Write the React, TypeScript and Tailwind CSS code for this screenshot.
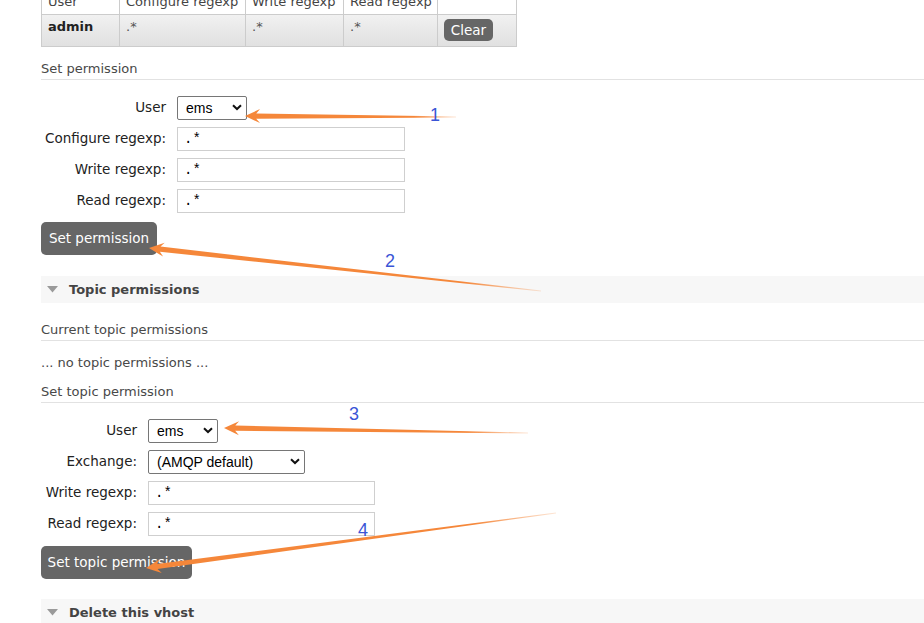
import React from "react";

/*
 * vhost 詳細 – permissions / topic permissions の画面
 * 矢印と番号は手書き注釈（スクリーンショット上の上書き）
 */

type Pt = [number, number];

function arrowPoints(tip: Pt, tail: Pt, headLen = 15, headHalf = 7, shaftHead = 2.6, shaftTail = 0.4) {
  const dx = tail[0] - tip[0];
  const dy = tail[1] - tip[1];
  const len = Math.hypot(dx, dy);
  const ux = dx / len;
  const uy = dy / len;
  const nx = -uy;
  const ny = ux;
  const bx = tip[0] + ux * headLen;
  const by = tip[1] + uy * headLen;
  const neck = headLen * 0.75;
  const cx = tip[0] + ux * neck;
  const cy = tip[1] + uy * neck;
  const pts: Pt[] = [
    tip,
    [bx + nx * headHalf, by + ny * headHalf],
    [cx + nx * shaftHead, cy + ny * shaftHead],
    [tail[0] + nx * shaftTail, tail[1] + ny * shaftTail],
    [tail[0] - nx * shaftTail, tail[1] - ny * shaftTail],
    [cx - nx * shaftHead, cy - ny * shaftHead],
    [bx - nx * headHalf, by - ny * headHalf],
  ];
  return pts.map((p) => `${p[0].toFixed(1)},${p[1].toFixed(1)}`).join(" ");
}

const arrows: { tip: Pt; tail: Pt; label: string; at: Pt }[] = [
  { tip: [245, 116], tail: [456, 117], label: "1", at: [430, 121] },
  { tip: [149, 248], tail: [541, 291], label: "2", at: [385, 267] },
  { tip: [224, 428], tail: [528, 433], label: "3", at: [349, 420] },
  { tip: [146, 568], tail: [556, 513], label: "4", at: [358, 536] },
];

function Annotations() {
  return (
    <svg className="pointer-events-none absolute left-0 top-0" width={924} height={623}>
      <defs>
        {arrows.map((a, i) => (
          <linearGradient
            key={i}
            id={`fade${i}`}
            gradientUnits="userSpaceOnUse"
            x1={a.tip[0]}
            y1={a.tip[1]}
            x2={a.tail[0]}
            y2={a.tail[1]}
          >
            <stop offset="0" stopColor="#f5873a" />
            <stop offset="0.8" stopColor="#f5873a" />
            <stop offset="1" stopColor="#f5873a" stopOpacity="0.2" />
          </linearGradient>
        ))}
      </defs>
      {arrows.map((a, i) => (
        <g key={i}>
          <polygon points={arrowPoints(a.tip, a.tail)} fill={`url(#fade${i})`} />
          <text x={a.at[0]} y={a.at[1]} fontSize="18" fontFamily="Liberation Sans, Arial, sans-serif" fill="#3a55d6">
            {a.label}
          </text>
        </g>
      ))}
    </svg>
  );
}

function Select({ value, width }: { value: string; width: string }) {
  return (
    <div className={`relative h-[24px] ${width}`}>
      <select
        defaultValue={value}
        className="h-full w-full appearance-none rounded-[2px] border border-[#767676] bg-white pl-[8px] font-['Liberation_Sans',Arial,sans-serif] text-[14px] text-black outline-none"
      >
        <option>{value}</option>
      </select>
      <svg className="pointer-events-none absolute right-[5px] top-[8px]" width="10" height="7" viewBox="0 0 10 7">
        <path d="M1 1.2 L5 5 L9 1.2" fill="none" stroke="#111" strokeWidth="2" />
      </svg>
    </div>
  );
}

function TextBox({ width }: { width: string }) {
  return (
    <input
      defaultValue=".*"
      className={`h-[24px] ${width} border border-[#cfcfcf] bg-white px-[6px] font-['Liberation_Mono',monospace] text-[14px] text-black outline-none`}
    />
  );
}

function Label({ children }: { children: React.ReactNode }) {
  return <div className="flex h-[24px] items-center justify-end whitespace-nowrap pb-[2px]">{children}</div>;
}

function Button({ children, className = "" }: { children: React.ReactNode; className?: string }) {
  return (
    <button className={`whitespace-nowrap rounded-[5px] bg-[#666] text-[13.5px] text-white ${className}`}>{children}</button>
  );
}

function SectionBar({ title }: { title: string }) {
  return (
    <div className="flex h-[27px] items-center gap-[11px] bg-[#f7f7f7] pl-[6px]">
      <svg width="11" height="7" viewBox="0 0 11 7">
        <path d="M0 0 H11 L5.5 6.5 Z" fill="#9a9a9a" />
      </svg>
      <span className="text-[13px] font-bold text-[#444]">{title}</span>
    </div>
  );
}

function SubHeading({ children }: { children: React.ReactNode }) {
  return (
    <h3 className="border-b border-[#e2e2e2] pb-[2px] text-[13px] leading-[16px] text-[#484848]">{children}</h3>
  );
}

const cell = "whitespace-nowrap border border-[#ccc] px-[6px] font-normal";
const bodyCell = `${cell} align-top pt-[4px] leading-[16px]`;

export default function App() {
  return (
    <div className="relative h-[623px] w-[924px] overflow-hidden bg-white font-['DejaVu_Sans',Verdana,sans-serif] text-[13px] text-[#333]">
      <div className="pl-[41px]">
        {/* 現在の permission テーブル（ヘッダはスクロールで上に切れている） */}
        <table className="-mt-[12px] w-[476px] table-fixed border-collapse border border-[#ccc] text-[13px]">
          <thead>
            <tr className="h-[26px] bg-white text-left text-[#444]">
              <th className={`w-[78px] ${cell}`}>User</th>
              <th className={`w-[126px] ${cell}`}>Configure regexp</th>
              <th className={`w-[98px] ${cell}`}>Write regexp</th>
              <th className={`w-[94px] ${cell}`}>Read regexp</th>
              <th className={cell}></th>
            </tr>
          </thead>
          <tbody>
            <tr className="h-[32px] bg-gradient-to-b from-[#f1f1f1] to-[#e0e0e0] text-[#555]">
              <td className={`${bodyCell} !font-bold text-[#222]`}>admin</td>
              <td className={bodyCell}>.*</td>
              <td className={bodyCell}>.*</td>
              <td className={bodyCell}>.*</td>
              <td className={bodyCell}>
                <Button className="h-[22px] w-[49px]">Clear</Button>
              </td>
            </tr>
          </tbody>
        </table>

        <div className="mt-[14px]">
          <SubHeading>Set permission</SubHeading>
        </div>

        <div className="mt-[16px] grid grid-cols-[125px_auto] items-center gap-x-[11px] gap-y-[7px] text-[13.5px] text-[#222]">
          <Label>User</Label>
          <Select value="ems" width="w-[70px]" />
          <Label>Configure regexp:</Label>
          <TextBox width="w-[228px]" />
          <Label>Write regexp:</Label>
          <TextBox width="w-[228px]" />
          <Label>Read regexp:</Label>
          <TextBox width="w-[228px]" />
        </div>

        <Button className="mt-[9px] h-[33px] w-[116px]">Set permission</Button>

        <div className="mt-[21px]">
          <SectionBar title="Topic permissions" />
        </div>

        <div className="mt-[19px]">
          <SubHeading>Current topic permissions</SubHeading>
        </div>
        <p className="mt-[14px] leading-[16px] text-[#484848]">... no topic permissions ...</p>

        <div className="mt-[13px]">
          <SubHeading>Set topic permission</SubHeading>
        </div>

        <div className="mt-[16px] grid grid-cols-[96px_auto] items-center gap-x-[11px] gap-y-[7px] text-[13.5px] text-[#222]">
          <Label>User</Label>
          <Select value="ems" width="w-[70px]" />
          <Label>Exchange:</Label>
          <Select value="(AMQP default)" width="w-[157px]" />
          <Label>Write regexp:</Label>
          <TextBox width="w-[227px]" />
          <Label>Read regexp:</Label>
          <TextBox width="w-[227px]" />
        </div>

        <Button className="mt-[10px] h-[33px] w-[151px]">Set topic permission</Button>

        <div className="mt-[20px]">
          <SectionBar title="Delete this vhost" />
        </div>
      </div>

      <Annotations />
    </div>
  );
}
